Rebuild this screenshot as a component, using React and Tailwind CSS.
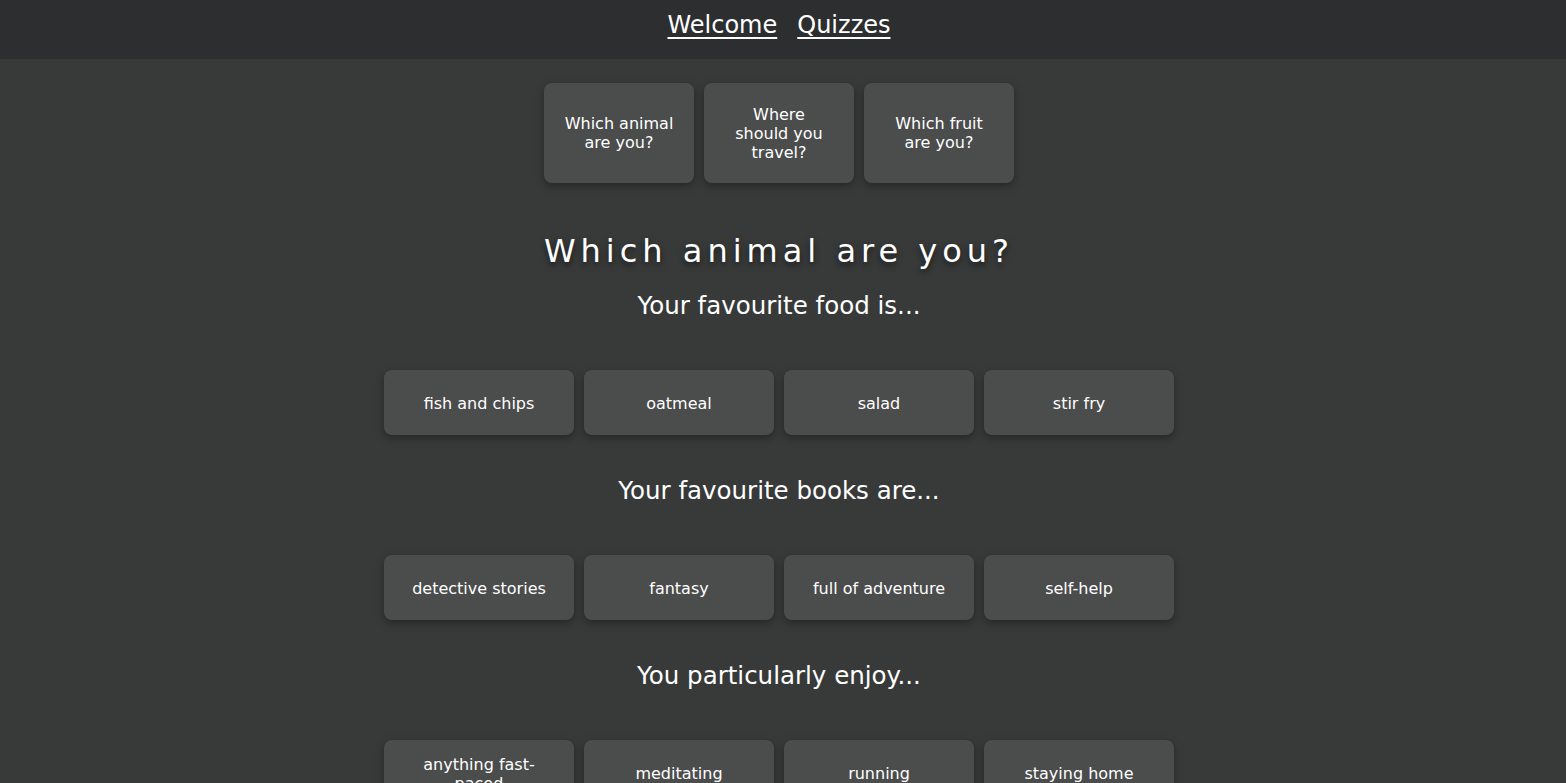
import React from "react";

const quizzes = [
  ["Which animal", "are you?"],
  ["Where", "should you", "travel?"],
  ["Which fruit", "are you?"],
];
const questions = [
  { q: "Your favourite food is...", a: [["fish and chips"], ["oatmeal"], ["salad"], ["stir fry"]] },
  { q: "Your favourite books are...", a: [["detective stories"], ["fantasy"], ["full of adventure"], ["self-help"]] },
  { q: "You particularly enjoy...", a: [["anything fast-", "paced"], ["meditating"], ["running"], ["staying home"]] },
];

function Lines({ lines }) {
  return lines.map((l, i) => (
    <React.Fragment key={i}>
      {i > 0 && <br />}
      {l}
    </React.Fragment>
  ));
}

export default function App() {
  return (
    <div className="min-h-screen bg-[#383a3a] text-white" style={{ fontFamily: '"DejaVu Sans", Verdana, sans-serif' }}>
      <nav className="h-[59px] bg-[#2d2e30] flex items-center justify-center gap-5 text-[24px] pb-[10px] pr-[8px]">
        <a href="#" className="underline underline-offset-4 decoration-2">Welcome</a>
        <a href="#" className="underline underline-offset-4 decoration-2">Quizzes</a>
      </nav>
      <div className="pr-[8px]">
        <div className="flex justify-center gap-[10px] pt-6">
          {quizzes.map((t, i) => (
            <div key={i} className="w-[150px] h-[100px] rounded-lg bg-[#4b4c4c] shadow-[0_3px_8px_rgba(0,0,0,0.35)] flex items-center justify-center text-center px-2 text-[16px] leading-[19px] whitespace-nowrap">
              <div><Lines lines={t} /></div>
            </div>
          ))}
        </div>
        <h1 className="text-center text-[32px] tracking-[5px] mt-[44px] leading-[48px] [text-shadow:0_3px_6px_rgba(0,0,0,0.6)]">Which animal are you?</h1>
        {questions.map((s, idx) => (
          <div key={s.q}>
            <h2 className={`text-center text-[24.5px] leading-[36px] ${idx === 0 ? "mt-[13px]" : "mt-[38px]"}`}>{s.q}</h2>
            <div className="flex justify-center gap-[10px] mt-[46px]">
              {s.a.map((a, i) => (
                <div key={i} className="w-[190px] h-[65px] rounded-lg bg-[#4b4c4c] shadow-[0_3px_8px_rgba(0,0,0,0.35)] flex items-center justify-center text-center px-2 pt-[2px] text-[16px] leading-[19px] whitespace-nowrap">
                  <div><Lines lines={a} /></div>
                </div>
              ))}
            </div>
          </div>
        ))}
        <div className="h-10" />
      </div>
    </div>
  );
}
